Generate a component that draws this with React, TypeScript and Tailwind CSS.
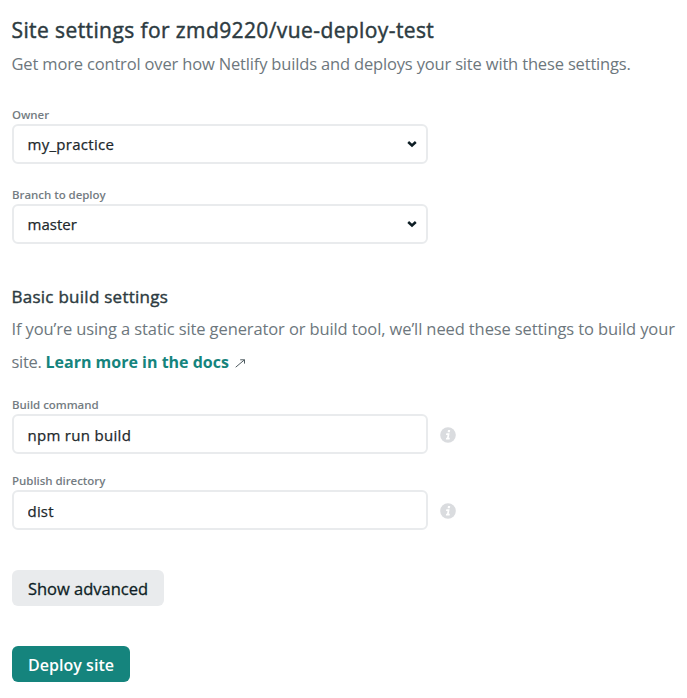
import React from "react";

const LABEL =
  "block h-[18px] whitespace-nowrap text-[11.5px] leading-[17px] font-semibold tracking-[-0.05px] text-[#747c82]";
const BOX =
  "h-10 w-[416px] rounded-md border-2 border-[#e9ebed] bg-white text-[15px] leading-[36px] text-[#1d282c] [-webkit-text-stroke:0.25px_#1d282c]";

function SelectField({ label, value, spacing }: { label: string; value: string; spacing: string }) {
  return (
    <div className="flex flex-col">
      <span className={LABEL}>{label}</span>
      <div className={BOX + " flex items-center justify-between pr-[9px] pl-[13.5px]"}>
        <span className={spacing}>{value}</span>
        <svg width="10" height="8" viewBox="0 0 10 8" fill="none">
          <path d="M1.2 2 5 5.5 8.8 2" stroke="#0e1e25" strokeWidth="2.5" />
        </svg>
      </div>
    </div>
  );
}

function InputField({ label, value, spacing }: { label: string; value: string; spacing: string }) {
  return (
    <div className="flex flex-col">
      <span className={LABEL}>{label}</span>
      <div className="flex items-center">
        <input
          className={BOX + " px-[13.5px] pt-0.5 outline-none " + spacing}
          defaultValue={value}
          aria-label={label}
        />
        <svg className="mt-0.5 ml-3" width="16" height="16" viewBox="0 0 16 16">
          <circle cx="8" cy="8" r="7.8" fill="#dadcdf" />
          <path
            d="M8 3h2.2L9.8 5.2H7.6ZM6.3 6.2h3.3L8.8 10.8h1.1L9.6 12.6H5.9L6.2 10.8h.8L7.5 7.9H6Z"
            fill="#fff"
          />
        </svg>
      </div>
    </div>
  );
}

export default function App() {
  return (
    <main className="flex h-[698px] w-[687px] flex-col items-start overflow-hidden bg-white pl-3 font-['Open_Sans','Noto_Sans',sans-serif] text-[#6d777d]">
      <h1 className="mt-[14px] -ml-[0.5px] h-8 text-[21px] leading-8 tracking-[0.4px] whitespace-nowrap text-[#2d3b41] [-webkit-text-stroke:0.45px_#2d3b41]">
        Site settings for zmd9220/vue-deploy-test
      </h1>
      <p className="mt-0.5 -ml-[0.5px] h-8 text-[16.5px] leading-8 tracking-[-0.165px] whitespace-nowrap">
        Get more control over how Netlify builds and deploys your site with these settings.
      </p>

      <div className="mt-[26px] flex flex-col gap-[22px]">
        <SelectField label="Owner" value="my_practice" spacing="tracking-[0.28px]" />
        <SelectField label="Branch to deploy" value="master" spacing="tracking-[0.02px]" />
      </div>

      <h2 className="mt-[38px] -ml-[0.5px] h-[30px] text-[17px] leading-[30px] tracking-[0.26px] whitespace-nowrap text-[#2d3b41] [-webkit-text-stroke:0.4px_#2d3b41]">
        Basic build settings
      </h2>
      <p className="-ml-[0.5px] h-[66px] text-[16.5px] leading-[33px] tracking-[-0.11px] whitespace-nowrap">
        If you’re using a static site generator or build tool, we’ll need these settings to build your
        <br />
        <span className="tracking-[-0.3px]">site. </span>
        <a className="text-[16px] font-bold tracking-normal text-[#15847d]">Learn more in the docs</a>
        <svg className="ml-[6px] inline-block align-[-1px]" width="11" height="11" viewBox="0 0 11 11" fill="none">
          <path d="M.7 9.2 9.5 1.8M5.2 1.8h4.3v3.8" stroke="#4e5a60" strokeWidth="1" />
        </svg>
      </p>

      <div className="mt-[18px] flex flex-col gap-[18px]">
        <InputField label="Build command" value="npm run build" spacing="tracking-[0.3px]" />
        <InputField label="Publish directory" value="dist" spacing="tracking-[0.2px]" />
      </div>

      <button className="mt-10 h-9 w-[152px] rounded-md bg-[#e9ebed] pt-0.5 text-[16.5px] leading-[34px] whitespace-nowrap text-[#0e1e25] [-webkit-text-stroke:0.3px_#0e1e25]">
        Show advanced
      </button>
      <button className="mt-10 h-9 w-[118px] rounded-md bg-[#15847d] pt-0.5 text-[16px] leading-[34px] font-semibold tracking-[0.05px] whitespace-nowrap text-white">
        Deploy site
      </button>
    </main>
  );
}
